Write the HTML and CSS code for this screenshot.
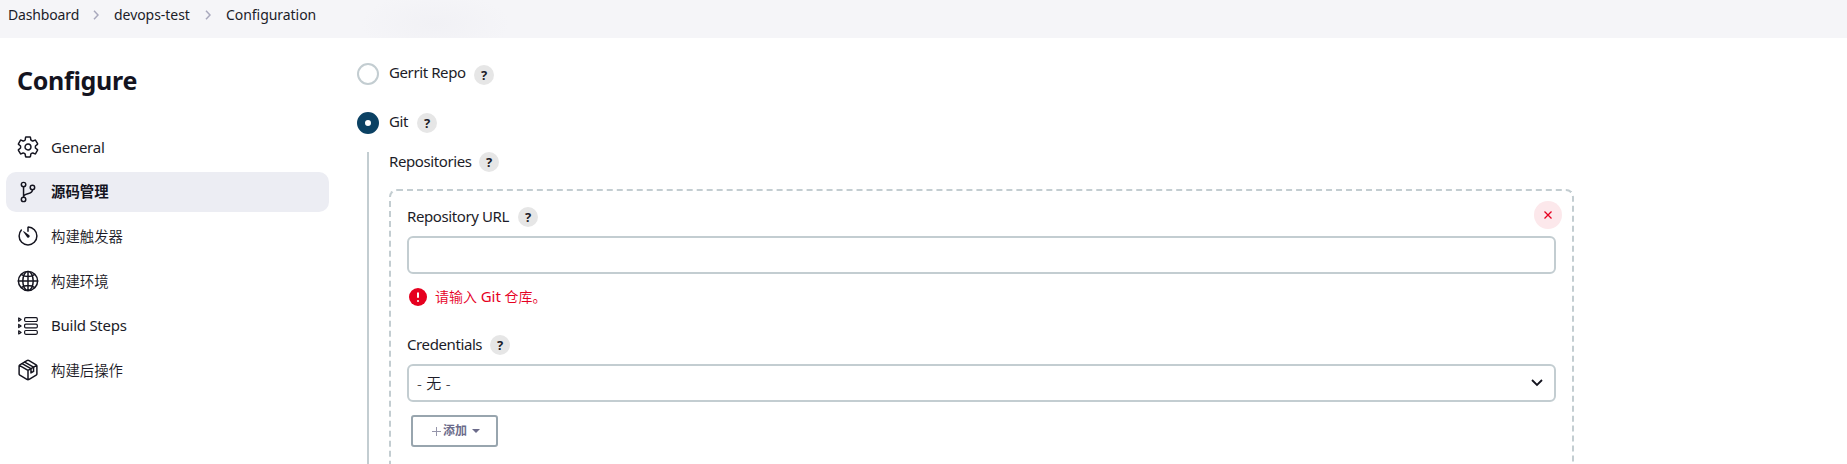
FILE: index.html
```html
<!DOCTYPE html>
<html lang="zh-CN">
<head>
<meta charset="utf-8">
<title>Configuration</title>
<link rel="stylesheet" href="styles.css">
</head>
<body>
<nav class="breadcrumbs">
  <span class="crumb crumb-dashboard">Dashboard</span>
  <svg class="sep" viewBox="0 0 6 10"><path d="M1 .8 5 5 1 9.2"/></svg>
  <span class="crumb crumb-project">devops-test</span>
  <svg class="sep" viewBox="0 0 6 10"><path d="M1 .8 5 5 1 9.2"/></svg>
  <span class="crumb crumb-config">Configuration</span>
</nav>
<div class="page">
  <aside class="sidebar">
    <h1 class="title">Configure</h1>
    <div class="tasks">
      <a class="task"><svg class="icon" viewBox="40 40 432 432"><path d="M262.29 192.31a64 64 0 1 0 57.4 57.4 64.13 64.13 0 0 0-57.4-57.4zM416.39 256a154.34 154.34 0 0 1-1.53 20.79l45.21 35.46a10.81 10.81 0 0 1 2.45 13.75l-42.77 74a10.81 10.81 0 0 1-13.14 4.59l-44.9-18.08a16.11 16.11 0 0 0-15.17 1.75A164.48 164.48 0 0 1 325 400.8a15.94 15.94 0 0 0-8.82 12.14l-6.73 47.89a11.08 11.08 0 0 1-10.68 9.17h-85.54a11.11 11.11 0 0 1-10.69-8.87l-6.72-47.82a16.07 16.07 0 0 0-9-12.22 155.3 155.3 0 0 1-21.46-12.57 16 16 0 0 0-15.11-1.71l-44.89 18.07a10.81 10.81 0 0 1-13.14-4.58l-42.77-74a10.8 10.8 0 0 1 2.45-13.75l38.21-30a16.05 16.05 0 0 0 6-14.08c-.36-4.17-.58-8.33-.58-12.5s.21-8.27.58-12.35a16 16 0 0 0-6.07-13.94l-38.19-30A10.81 10.81 0 0 1 49.48 186l42.77-74a10.81 10.81 0 0 1 13.14-4.59l44.9 18.08a16.11 16.11 0 0 0 15.17-1.75A164.48 164.48 0 0 1 187 111.2a15.94 15.94 0 0 0 8.82-12.14l6.73-47.89A11.08 11.08 0 0 1 213.23 42h85.54a11.11 11.11 0 0 1 10.69 8.87l6.72 47.82a16.07 16.07 0 0 0 9 12.22 155.3 155.3 0 0 1 21.46 12.57 16 16 0 0 0 15.11 1.71l44.89-18.07a10.81 10.81 0 0 1 13.14 4.58l42.77 74a10.8 10.8 0 0 1-2.45 13.75l-38.21 30a16.05 16.05 0 0 0-6.05 14.08c.33 4.14.55 8.3.55 12.47z"/></svg><span class="latin">General</span></a>
      <a class="task active"><svg class="icon" viewBox="40 40 432 432"><circle cx="160" cy="96" r="48"/><circle cx="160" cy="416" r="48"/><circle cx="352" cy="160" r="48"/><path d="M160 368V144M352 208c0 128-192 48-192 160"/></svg><span>源码管理</span></a>
      <a class="task"><svg class="icon" viewBox="40 40 432 432"><path d="M112.91 128A191.85 191.85 0 0 0 64 254c-1.18 106.35 85.65 193.8 192 194 106.2.2 192-85.83 192-192 0-104.54-83.55-189.61-187.5-192a4.36 4.36 0 0 0-4.5 4.37V152"/><path class="solid" d="m233.38 278.63-79-113a8.13 8.13 0 0 1 11.32-11.32l113 79a32.5 32.5 0 0 1-37.25 53.26 33.21 33.21 0 0 1-8.07-7.94z"/></svg><span class="cjk">构建触发器</span></a>
      <a class="task"><svg class="icon" viewBox="40 40 432 432"><circle cx="256" cy="256" r="208"/><path d="M256 48c-58 0-112.700 93.130-112.700 208S198 464 256 464s112.700-93.130 112.700-208S314 48 256 48zM117.330 117.330c38.240 27.150 86.380 43.340 138.670 43.340s100.430-16.190 138.670-43.340M394.670 394.670c-38.240-27.150-86.380-43.340-138.670-43.340s-100.430 16.190-138.670 43.340M256 48v416M464 256H48"/></svg><span class="cjk">构建环境</span></a>
      <a class="task"><svg class="icon steps" viewBox="0 0 20 20"><rect x="6.600" y="1.700" width="12.700" height="3.800" rx="1.200"/><rect x="6.600" y="8.100" width="12.700" height="3.800" rx="1.200"/><rect x="6.600" y="14.500" width="12.700" height="3.800" rx="1.200"/><path d="M.7 2v3.200l2.400-1.600zM.7 8.400v3.200L3.100 10zM.7 14.800V18l2.400-1.600z"/></svg><span class="latin t-steps">Build Steps</span></a>
      <a class="task"><svg class="icon" viewBox="40 40 432 432"><path d="M448 341.370V170.610A32 32 0 0 0 432.110 143l-152-88.460a47.940 47.940 0 0 0-48.240 0L79.890 143A32 32 0 0 0 64 170.610v170.760A32 32 0 0 0 79.890 369l152 88.460a48 48 0 0 0 48.240 0l152-88.460A32 32 0 0 0 448 341.370zM69 153.990l187 110 187-110M256 463.990v-200"/><path d="M128 120l192 108v92l56-32v-92L184 88"/></svg><span class="cjk">构建后操作</span></a>
    </div>
  </aside>
  <main class="content">
    <div class="option gerrit"><i class="radio"></i><span class="text t-gerrit">Gerrit Repo</span><b class="help help-low">?</b></div>
    <div class="option git"><i class="radio checked"></i><span class="text t-git">Git</span><b class="help">?</b></div>
    <section class="nested">
      <div class="label"><span class="text t-repos">Repositories</span><b class="help">?</b></div>
      <div class="repo">
        <div class="repo-head">
          <div class="label"><span class="text t-url">Repository URL</span><b class="help">?</b></div>
          <span class="delete"><svg viewBox="0 0 8 8"><path d="m.5.5 7 7m0-7-7 7"/></svg></span>
        </div>
        <div class="field"></div>
        <div class="error"><svg viewBox="0 0 18 18"><circle cx="9" cy="9" r="9"/><path d="M9 4.600v5.200M9 12.200v1.600"/></svg><span>请输入 <span class="error-git">Git</span> 仓库。</span></div>
        <div class="label cred"><span class="text t-cred">Credentials</span><b class="help">?</b></div>
        <div class="field select"><span>- 无 -</span><svg viewBox="0 0 12 8"><path d="m1 1 5 5 5-5"/></svg></div>
        <div class="add"><svg class="plus" viewBox="0 0 9 9"><path d="M4.500 0v9M0 4.500h9"/></svg><span>添加</span><i class="caret"></i></div>
      </div>
    </section>
  </main>
</div>
</body>
</html>
```
FILE: styles.css
```css
* { box-sizing: border-box; }
body {
  margin: 0;
  height: 464px;
  overflow: hidden;
  background: #fff;
  color: #1c1c28;
  font: 15px/20px "Noto Sans", "Noto Sans CJK SC", sans-serif;
  white-space: nowrap;
}
svg { fill: none; flex: none; display: block; }
.breadcrumbs {
  height: 38px;
  padding: 5px 0 0 8px;
  display: flex;
  align-items: flex-start;
  font-size: 14px;
  letter-spacing: -.05px;
  background: radial-gradient(ellipse 75px 32px at 435px 24px, #f1f1f5, #f5f5f8) #f5f5f8;
}
.sep { width: 6px; height: 10px; margin: 5px 15px 0; stroke: #a9a9bd; stroke-width: 1.5; }
.crumb-dashboard { width: 70px; letter-spacing: -.15px; }
.crumb-project { width: 76px; }
.page { display: flex; height: 426px; }
.sidebar { width: 357px; padding: 23px 28px 0 6px; flex: none; }
.title { margin: 0 0 28px 11px; font: 700 25px/38px "Noto Sans", sans-serif; letter-spacing: -.3px; color: #14141f; }
.tasks { display: flex; flex-direction: column; gap: 4.7px; }
.task { height: 40px; padding-left: 12px; border-radius: 10px; display: flex; align-items: center; gap: 13px; font-size: 14.4px; font-weight: 350; }
.latin { font-size: 15px; font-weight: 400; letter-spacing: -.25px; }
.cjk { padding-top: 2px; }
.t-steps { padding-bottom: 2px; }
.active { background: #ecedf3; font-weight: 700; color: #14141f; }
.icon { width: 20px; height: 20px; overflow: visible; stroke: #14141f; stroke-width: 32; stroke-linecap: round; stroke-linejoin: round; }
.icon .solid { fill: #14141f; stroke: none; }
.steps { stroke-width: 1.2; }
.content { width: 1217px; }
.option { display: flex; align-items: center; height: 22px; }
.gerrit { margin-top: 25px; }
.git { margin-top: 27px; }
.radio { width: 22px; height: 22px; margin-right: 10px; border: 2px solid #c3cdd1; border-radius: 50%; flex: none; }
.radio.checked { border: 8px solid #0b4163; }
.text { letter-spacing: -.4px; padding-bottom: 2px; }
.option .text { padding-bottom: 4px; }
.help { width: 20px; height: 20px; border-radius: 50%; background: #e6e6e6; font: 700 13px/20px "Noto Sans", sans-serif; text-align: center; margin-left: 8px; flex: none; }
.help-low { margin-top: 2px; }
.nested { margin: 18px 0 0 10px; padding-left: 20px; border-left: 2px solid #c3cdd1; height: 312px; }
.label { display: flex; height: 20px; align-items: center; }
.repo { height: 275px; margin-top: 17px; padding: 10px 16px; border: 2px dashed #c3cdd1; border-bottom: 0; border-radius: 8px 8px 0 0; }
.repo-head { display: flex; justify-content: space-between; height: 35px; margin-right: -6px; }
.repo-head .label { margin-top: 6px; }
.delete { width: 28px; height: 28px; border-radius: 50%; background: #fce8eb; display: grid; place-items: center; }
.delete svg { width: 8px; height: 8px; stroke: #e6001f; stroke-width: 1.3; }
.field { height: 38px; border: 2px solid #c3cdd1; border-radius: 6px; }
.error { display: flex; align-items: center; height: 20px; margin: 13px 0 0 2px; color: #e6001f; gap: 8px; font-size: 14px; font-weight: 350; }
.error > span { padding-bottom: 2px; }
.error-git { font-size: 15px; font-weight: 400; }
.error svg { width: 18px; height: 18px; fill: #e6001f; stroke: none; }
.error path { stroke: #fff; stroke-width: 2; }
.cred { margin-top: 28px; }
.select { margin-top: 9px; padding: 0 11px 0 8px; display: flex; align-items: center; justify-content: space-between; font-weight: 350; letter-spacing: .3px; }
.select svg { width: 12px; height: 8px; stroke: #14141f; stroke-width: 1.8; }
.add { width: 87px; height: 32px; margin: 13px 0 0 4px; padding-left: 19px; border: 2px solid #98a5ae; border-radius: 3px; display: flex; align-items: center; font-size: 12px; font-weight: 600; color: #6b6b8a; }
.plus { width: 9px; height: 9px; margin-right: 2px; stroke: #9595aa; stroke-width: 1; }
.caret { border: 4px solid transparent; border-top-color: #6b6b8a; border-bottom: 0; margin-left: 5px; }
.t-gerrit { width: 77px; }
.t-git { width: 20px; }
.t-repos { width: 82px; }
.t-url { width: 103px; }
.t-cred { width: 75px; }
```
